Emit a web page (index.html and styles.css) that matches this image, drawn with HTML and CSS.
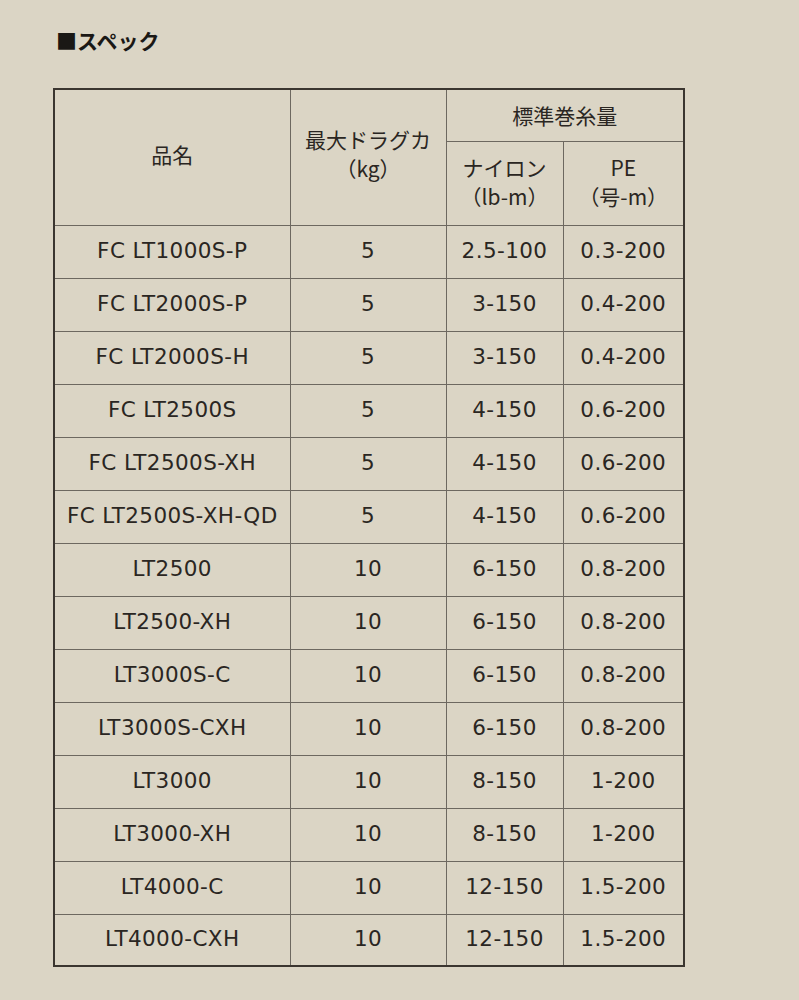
FILE: index.html
```html
<!DOCTYPE html>
<html lang="ja">
<head>
<meta charset="utf-8">
<link rel="stylesheet" href="styles.css">
</head>
<body>
<div class="page">
  <h2 class="title">■スペック</h2>
  <table class="spec">
    <colgroup>
      <col class="c1"><col class="c2"><col class="c3"><col class="c4">
    </colgroup>
    <thead>
      <tr class="h1">
        <th rowspan="2" class="tall">品名</th>
        <th rowspan="2" class="tall">最大ドラグカ<br>（kg）</th>
        <th colspan="2">標準巻糸量</th>
      </tr>
      <tr class="h2">
        <th>ナイロン<br>（lb-m）</th>
        <th>PE<br>（号-m）</th>
      </tr>
    </thead>
    <tbody>
      <tr><td>FC LT1000S-P</td><td>5</td><td>2.5-100</td><td>0.3-200</td></tr>
      <tr><td>FC LT2000S-P</td><td>5</td><td>3-150</td><td>0.4-200</td></tr>
      <tr><td>FC LT2000S-H</td><td>5</td><td>3-150</td><td>0.4-200</td></tr>
      <tr><td>FC LT2500S</td><td>5</td><td>4-150</td><td>0.6-200</td></tr>
      <tr><td>FC LT2500S-XH</td><td>5</td><td>4-150</td><td>0.6-200</td></tr>
      <tr><td>FC LT2500S-XH-QD</td><td>5</td><td>4-150</td><td>0.6-200</td></tr>
      <tr><td>LT2500</td><td>10</td><td>6-150</td><td>0.8-200</td></tr>
      <tr><td>LT2500-XH</td><td>10</td><td>6-150</td><td>0.8-200</td></tr>
      <tr><td>LT3000S-C</td><td>10</td><td>6-150</td><td>0.8-200</td></tr>
      <tr><td>LT3000S-CXH</td><td>10</td><td>6-150</td><td>0.8-200</td></tr>
      <tr><td>LT3000</td><td>10</td><td>8-150</td><td>1-200</td></tr>
      <tr><td>LT3000-XH</td><td>10</td><td>8-150</td><td>1-200</td></tr>
      <tr><td>LT4000-C</td><td>10</td><td>12-150</td><td>1.5-200</td></tr>
      <tr class="last"><td>LT4000-CXH</td><td>10</td><td>12-150</td><td>1.5-200</td></tr>
    </tbody>
  </table>
</div>
</body>
</html>
```

FILE: styles.css
```css
html, body {
  margin: 0;
  padding: 0;
  background: #dbd5c5;
}
body {
  font-family: "DejaVu Sans", "Noto Sans CJK JP", sans-serif;
  color: #2a2622;
}
.page {
  padding: 27px 0 0 53px;
}
.title {
  margin: 0 0 35px 3px;
  font-family: "Noto Sans CJK JP", sans-serif;
  font-size: 21px;
  font-weight: bold;
  line-height: 26px;
  color: #1a1815;
}
.spec {
  border-collapse: collapse;
  table-layout: fixed;
  width: 630px;
  border: 2px solid #3b3630;
  font-size: 21.5px;
  letter-spacing: 0.4px;
}
.c1 { width: 236px; }
.c2 { width: 156px; }
.c3 { width: 117px; }
.c4 { width: 121px; }
.spec th, .spec td {
  border: 1px solid #6d6860;
  text-align: center;
  vertical-align: middle;
  padding: 0;
  font-weight: normal;
}
.spec th {
  font-family: "Noto Sans CJK JP", sans-serif;
  font-size: 21px;
  line-height: 29px;
  letter-spacing: 0;
}
.spec th.tall { padding-bottom: 7px; }
.h1 th { height: 51px; }
.h2 th { height: 80px; padding-bottom: 3px; }
.spec td { height: 49px; padding-bottom: 3px; }
.spec .last td { height: 47px; }
```
